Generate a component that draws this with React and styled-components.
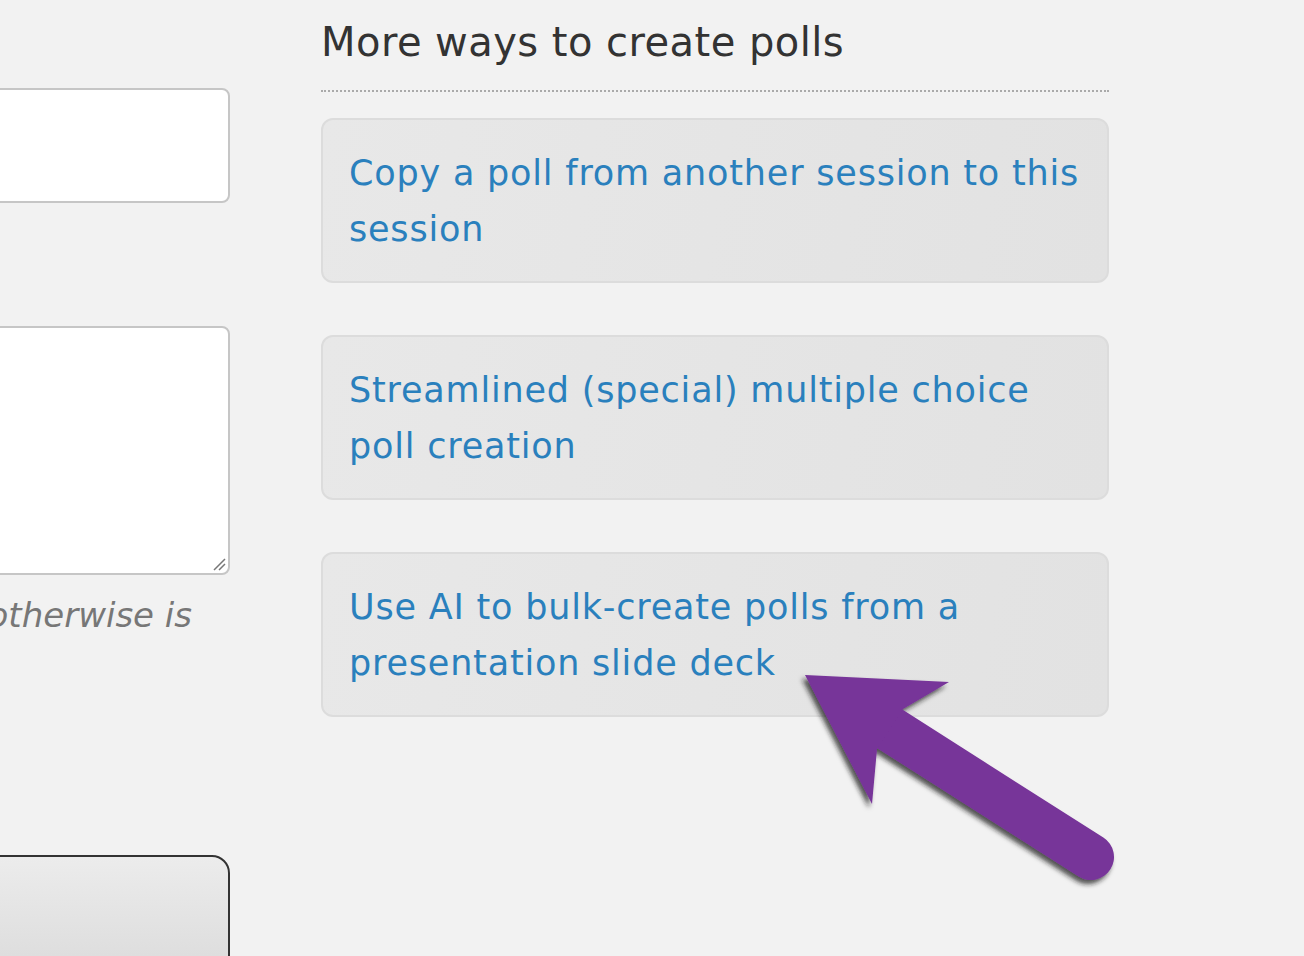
import React from 'react';
import styled, { createGlobalStyle } from 'styled-components';

const GlobalStyle = createGlobalStyle`
    html, body {
        margin: 0;
        padding: 0;
        background: #f2f2f2;
        overflow: hidden;
    }
    body {
        font-family: "DejaVu Sans", Verdana, sans-serif;
    }
`;

const OPTIONS = [
    'Copy a poll from another session to this session',
    'Streamlined (special) multiple choice poll creation',
    'Use AI to bulk-create polls from a presentation slide deck'
];

export default function App() {
    return (
        <Root>
            <GlobalStyle />
            <FormColumn>
                <TextInput />
                <TextArea>
                    <ResizeGrip viewBox="0 0 14 14">
                        <path d="M2 13 L13 2 M7 13 L13 7" stroke="#777" strokeWidth="1.5" />
                    </ResizeGrip>
                </TextArea>
                <HintRow>
                    <Hint>Shown on the poll screen if set, otherwise is</Hint>
                </HintRow>
                <SubmitButton />
            </FormColumn>
            <SideColumn>
                <Heading>More ways to create polls</Heading>
                <Divider />
                <OptionList>
                    {OPTIONS.map(text => (
                        <OptionCard key={text}>
                            <OptionLink href="#">{text}</OptionLink>
                        </OptionCard>
                    ))}
                </OptionList>
            </SideColumn>
            <Arrow viewBox="0 0 1304 956">
                <defs>
                    <filter id="arrowShadow" x="-20%" y="-20%" width="140%" height="140%">
                        <feDropShadow dx="-3" dy="4" stdDeviation="2.5" floodColor="#1a1a1a" floodOpacity="0.75" />
                    </filter>
                </defs>
                <g filter="url(#arrowShadow)" fill="#773499">
                    <line x1="890" y1="729" x2="1091" y2="857" stroke="#773499" strokeWidth="46" strokeLinecap="round" />
                    <polygon points="805,675 949,682 903,709 877,749 872,804" />
                </g>
            </Arrow>
        </Root>
    );
}

const Root = styled.div`
    position: relative;
    width: 1304px;
    height: 956px;
    display: flex;
    align-items: flex-start;
    overflow: hidden;
`;

const FormColumn = styled.div`
    width: 260px;
    margin-left: -30px;
    padding-top: 88px;
    display: flex;
    flex-direction: column;
`;

const TextInput = styled.div`
    height: 111px;
    background: #fff;
    border: 2px solid #c6c6c6;
    border-radius: 8px;
`;

const TextArea = styled.div`
    position: relative;
    margin-top: 123px;
    height: 245px;
    background: #fff;
    border: 2px solid #c6c6c6;
    border-radius: 8px;
`;

const ResizeGrip = styled.svg`
    position: absolute;
    right: 2px;
    bottom: 2px;
    width: 14px;
    height: 14px;
`;

const HintRow = styled.div`
    display: flex;
    justify-content: flex-end;
    padding-right: 38px;
    margin-top: 18px;
`;

const Hint = styled.div`
    white-space: nowrap;
    font-style: italic;
    font-size: 34px;
    line-height: 44px;
    color: #777;
`;

const SubmitButton = styled.div`
    margin-top: 218px;
    height: 140px;
    border: 2px solid #333;
    border-radius: 18px;
    background: linear-gradient(#ececec, #d8d8d8);
`;

const SideColumn = styled.div`
    width: 788px;
    margin-left: 91px;
    display: flex;
    flex-direction: column;
`;

const Heading = styled.h2`
    margin: 14px 0 0 0;
    font-size: 40px;
    letter-spacing: 0.45px;
    line-height: 56px;
    font-weight: normal;
    color: #333;
`;

const Divider = styled.div`
    margin-top: 20px;
    border-top: 2px dotted #aaa;
`;

const OptionList = styled.div`
    margin-top: 26px;
    display: flex;
    flex-direction: column;
    gap: 52px;
`;

const OptionCard = styled.div`
    padding: 25px 26px 24px;
    border: 2px solid #dcdcdc;
    border-radius: 12px;
    background: linear-gradient(100deg, #e8e8e8, #e2e2e2);
`;

const OptionLink = styled.a`
    display: block;
    font-size: 35px;
    letter-spacing: 0.8px;
    line-height: 56px;
    color: #2a80bd;
    text-decoration: none;
`;

const Arrow = styled.svg`
    position: absolute;
    left: 0;
    top: 0;
    width: 1304px;
    height: 956px;
    pointer-events: none;
`;
